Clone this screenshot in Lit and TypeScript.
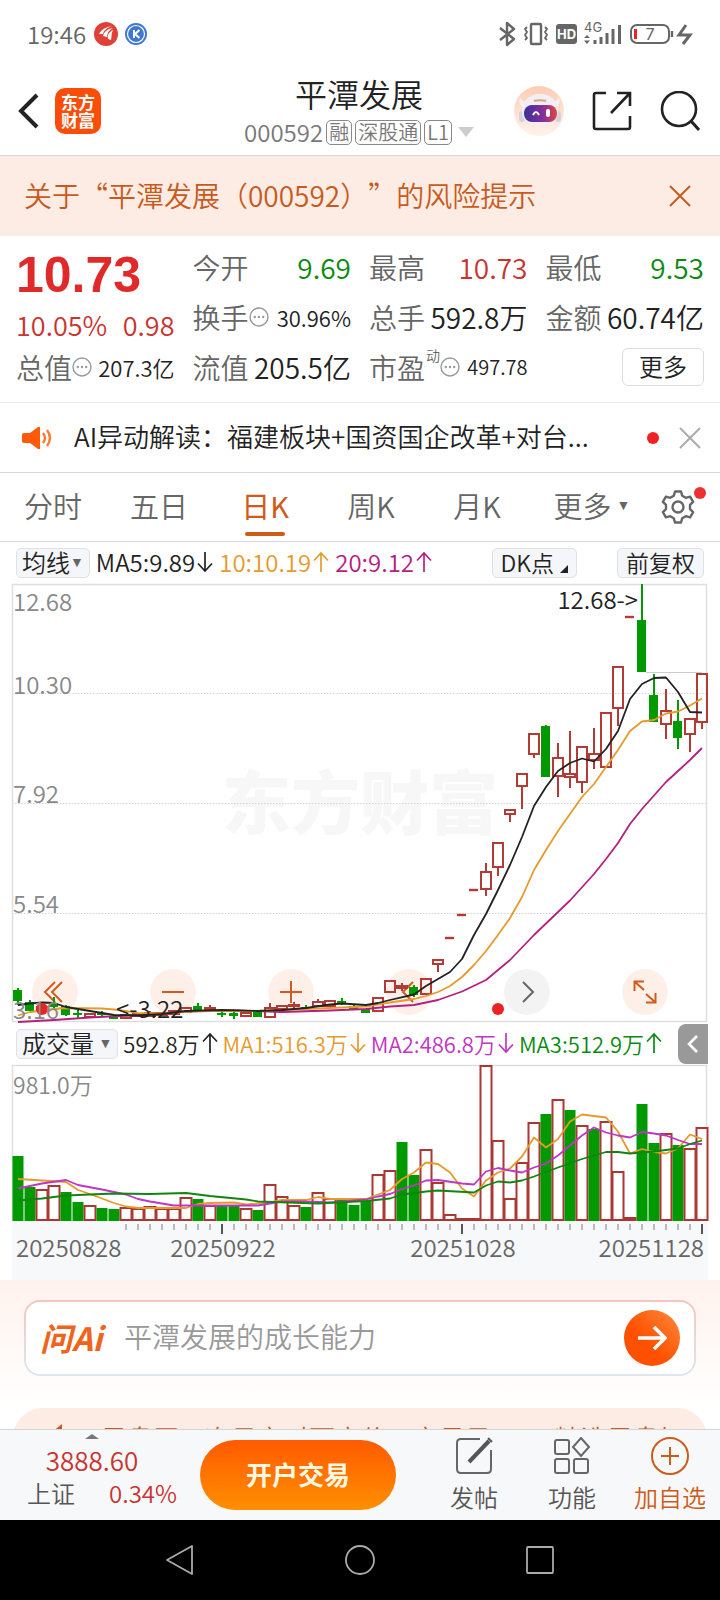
import { LitElement, html, svg, css } from "lit";
import { customElement, state } from "lit/decorators.js";
import { classMap } from "lit/directives/class-map.js";

type Candle = [up: 0 | 1, top: number, bottom: number, high?: number, low?: number];
type Point = [index: number, y: number];

const STEP = 12;
const cx = (i: number) => 6 + i * STEP;

// Body top/bottom and wick high/low, in chart units measured from the top edge.
const CANDLES: Candle[] = [
  [0, 406, 417, 404, 421], [0, 418, 427, 416, 427], [1, 423, 427, 421, 429], [0, 419, 423, 413, 424],
  [0, 422, 431, 421, 432], [0, 429, 431, 426, 434], [1, 430, 433], [0, 429, 431, 427, 432],
  [0, 432, 435], [1, 431, 434], [1, 430, 432], [1, 429, 432, 427, 432],
  [1, 429, 431], [1, 427, 430], [1, 424, 428], [0, 422, 426, 419, 426],
  [1, 424, 426, 421, 427], [0, 429, 431, 427, 433], [0, 429, 432, 428, 435], [1, 429, 432],
  [0, 428, 433], [1, 424, 433, 419, 433], [1, 422, 425], [1, 421, 422, 418, 425],
  [0, 423, 425, 421, 426], [1, 418, 422, 415, 422], [1, 417, 422], [0, 417, 420, 414, 421],
  [0, 422, 425, 421, 426], [0, 425, 429], [1, 414, 427], [1, 397, 408],
  [1, 402, 404, 399, 407], [0, 403, 411, 401, 413], [1, 395, 410], [1, 376, 380, 375, 388],
  [1, 354, 354], [1, 331, 331], [1, 306, 306], [1, 288, 305, 279, 312],
  [1, 259, 283, 258, 292], [1, 226, 230, 225, 238], [1, 190, 202, 189, 225], [1, 150, 170, 149, 174],
  [0, 142, 193, 141, 193], [1, 174, 192, 159, 213], [1, 190, 193, 147, 204], [1, 163, 198, 162, 209],
  [1, 170, 176, 144, 185], [1, 129, 183], [1, 83, 124, 82, 142], [1, 33, 33],
  [0, 36, 88, 0, 88], [0, 111, 138, 90, 138], [1, 127, 140, 105, 155], [0, 137, 154, 116, 165],
  [1, 135, 150, 134, 168], [1, 90, 138, 89, 145],
];

const VOLUMES = [
  65, 34, 31, 35, 29, 19, 15, 13, 12, 13, 12, 14, 12, 12, 23, 22, 15, 15, 15, 12, 11, 36, 24, 15, 14, 28, 22, 23, 16,
  20, 46, 50, 79, 46, 71, 38, 6, 2, 2, 155, 80, 22, 58, 98, 107, 121, 111, 95, 92, 99, 49, 3, 117, 78, 87, 76, 72, 93,
];
// Days whose volume bar takes the colour opposite to that of the candle.
const FLIPPED = new Set([3, 32, 46, 48]);

const MA5: Point[] = [
  [0, 421], [1, 419.5], [2, 418.5], [3, 419], [4, 423], [5, 425], [6, 427], [7, 429], [8, 431], [10, 431.5], [12, 430],
  [14, 427], [17, 426], [20, 427], [22, 426], [24, 424], [26, 420.5], [27, 419.5], [29, 421], [30, 419], [31, 416],
  [33, 410.5], [34, 402], [36, 388], [37, 375], [38, 351], [39, 330], [40, 306], [41, 281], [42, 253], [43, 222],
  [44, 203], [45, 187], [46, 179], [47, 174.5], [48, 177.5], [49, 165], [50, 147], [51, 115], [52, 100], [53, 94],
  [54, 93.5], [55, 108], [56, 128], [57, 128.5],
];
const MA10: Point[] = [
  [0, 431.5], [1, 428], [2, 426.5], [3, 425], [4, 424], [7, 424.5], [8, 425.5], [9, 427], [10, 429], [12, 429.5],
  [15, 427], [20, 427], [24, 425], [29, 422.5], [31, 418.5], [33, 415], [34, 412], [35, 408], [36, 402], [37, 393],
  [38, 381], [39, 367], [40, 351], [41, 334], [42, 313], [43, 286], [44, 266], [45, 247], [46, 230], [47, 213],
  [48, 200], [49, 183], [50, 166], [51, 147], [52, 137.5], [53, 136], [54, 129.5], [55, 127.5], [56, 121.5], [57, 114.5],
];
const MA20: Point[] = [
  [0, 438], [3, 436], [6, 433.5], [10, 431], [14, 427.5], [18, 426.5], [22, 428], [26, 426.5], [29, 425], [31, 422.5],
  [33, 421], [35, 416], [37, 407.5], [39, 396], [41, 376], [43, 351], [45, 328], [46, 316.5], [48, 290], [49, 275],
  [50, 259], [51, 240], [52, 225], [53, 211.5], [54, 198], [55, 187], [56, 176], [57, 164],
];

// Volume averages, as heights above the baseline.
const VMA1: Point[] = [
  [0, 42], [2, 40.5], [4, 39], [5, 31], [6, 27], [7, 22.5], [8, 18], [9, 14.5], [10, 13], [14, 13], [15, 17], [16, 18],
  [18, 18.5], [19, 16.5], [21, 18.5], [22, 21], [24, 21], [25, 24], [26, 22], [29, 22], [30, 26.5], [31, 31], [32, 42],
  [33, 48.5], [34, 58.5], [35, 57], [36, 48.5], [37, 32.5], [38, 24.5], [39, 40.5], [40, 48.5], [41, 52.5], [42, 64.5],
  [43, 83.5], [44, 73.5], [45, 82], [46, 99.5], [47, 106.5], [48, 105], [49, 103.5], [50, 89.5], [51, 67.5], [52, 72],
  [53, 69], [54, 67.5], [55, 72.5], [56, 86.5], [57, 82],
];
const VMA2: Point[] = [
  [0, 32.5], [2, 37.5], [4, 41], [5, 36], [7, 31.5], [9, 26.5], [10, 22], [11, 19.5], [13, 15.5], [16, 15.5], [20, 15.5],
  [22, 19.5], [24, 19.5], [26, 18.5], [29, 21.5], [30, 24.5], [31, 27], [32, 32], [33, 35.5], [34, 40.5], [35, 41],
  [37, 37.5], [38, 36.5], [39, 49.5], [40, 53], [41, 50.5], [42, 48.5], [43, 53.5], [44, 57.5], [45, 65.5], [46, 75.5],
  [47, 85.5], [48, 93.5], [49, 88.5], [50, 85.5], [51, 83.5], [52, 89], [53, 87.5], [54, 85.5], [55, 81], [56, 77], [57, 77],
];
const VMA3: Point[] = [
  [0, 20.5], [2, 22.5], [4, 25.5], [8, 27.5], [11, 27], [14, 28], [16, 25], [19, 21.5], [20, 19.5], [25, 17.5],
  [29, 20], [31, 22.5], [32, 26.5], [34, 29.5], [35, 30.5], [38, 28.5], [39, 35.5], [40, 39.5], [41, 38.5], [42, 40.5],
  [43, 44.5], [45, 53.5], [47, 62], [48, 65.5], [49, 69], [50, 69], [51, 67.5], [53, 69.5], [55, 72.5], [56, 77], [57, 80.5],
];

const line = (pts: Point[], map: (y: number) => number = (y) => y) =>
  pts.map(([i, y]) => `${cx(i)},${map(y)}`).join(" ");

const cross = html`<svg viewBox="0 0 22 22" width="22" height="22" aria-hidden="true">
  <path d="M1 1 21 21M21 1 1 21" fill="none" stroke="currentColor" stroke-width="2" /></svg>`;

const info = html`<svg class="info" viewBox="0 0 20 20" width="20" height="20" aria-hidden="true">
  <circle cx="10" cy="10" r="9" fill="none" stroke="#999" stroke-width="1.4" />
  <circle cx="5.8" cy="10" r="1.2" fill="#999" /><circle cx="10" cy="10" r="1.2" fill="#999" /><circle cx="14.2" cy="10" r="1.2" fill="#999" /></svg>`;

const arrow = (up: boolean) => html`<svg viewBox="0 0 16 22" width="16" height="22" aria-label=${up ? "升" : "降"}>
  <path d=${up ? "M8 21V2M1 9.5 8 2l7 7.5" : "M8 1v19M1 12.5 8 20l7-7.5"} fill="none" stroke="currentColor" stroke-width="1.7" /></svg>`;

@customElement("price-chart")
export class PriceChart extends LitElement {
  static styles = css`
    :host { display: block; position: relative; }
    .plot { display: block; position: relative; width: 100%; height: auto; overflow: visible; pointer-events: none; }
    text { font-family: "Noto Sans CJK SC", sans-serif; font-size: 24px; font-weight: 350; }
    .mark { font-size: 69px; font-weight: 900; fill: #f7f7f7; }
    .axis { fill: #888; }
    .note { fill: #222; }
    .tools { position: absolute; left: 20px; right: 40px; bottom: 7px; display: flex; justify-content: space-between; }
    .tool { width: 46px; height: 46px; padding: 0; border: 0; border-radius: 50%; background: #fef0e9; color: #d05c1e; }
    .tool.next { background: #f3f3f3; color: #666; }
    .tool svg { display: block; }
  `;

  private candle([up, top, bottom, high = top, low = bottom]: Candle, i: number) {
    const x = cx(i);
    const color = up ? "#b43a35" : "#009a00";
    if (top === bottom) return svg`<rect x=${x - 5} y=${top - 1.2} width="9" height="2.4" fill=${color} />`;
    return svg`
      <path d="M${x} ${high}V${top}M${x} ${bottom}V${low}" stroke=${color} stroke-width="2" />
      ${up
        ? svg`<rect x=${x - 5} y=${top} width="10" height=${bottom - top} fill="none" stroke=${color} stroke-width="2" />`
        : svg`<rect x=${x - 5} y=${top} width="9" height=${bottom - top} fill=${color} />`}`;
  }

  render() {
    const icons: [string, string][] = [
      ["快退", "M30 13 20 23l10 10M23 13 13 23l10 10"],
      ["缩小", "M12 23h22"],
      ["放大", "M12 23h22M23 12v22"],
      ["上一根", "M27 13 17 23l10 10"],
      ["下一根", "M19 13 29 23 19 33"],
      ["全屏", "M22 21 13 13M12.500 22v-9.500h9.500M24 25l9 8M33.500 24v9.500h-9.500"],
    ];
    return html`
      <div class="tools">
        ${icons.map(([label, d]) => html`<button class=${classMap({ tool: true, next: label === "下一根" })} aria-label=${label}>
          <svg viewBox="0 0 46 46" width="46" height="46" aria-hidden="true"><path d=${d} fill="none" stroke="currentColor" stroke-width="2" /></svg>
        </button>`)}
      </div>
      <svg class="plot" viewBox="0 0 696 438" role="img" aria-label="日K线图">
        <text class="mark" x="210" y="245">东方财富</text>
        <path d="M0 109.500H695M0 219.500H695M0 329.500H695" stroke="#d5d5d5" stroke-dasharray="1.500 1.500" />
        <rect x="0.500" y="0.500" width="694" height="437" fill="none" stroke="#dedede" stroke-width="1.500" />
        <path d="M634 88.500H690" stroke="#ccc" />
        ${CANDLES.map((c, i) => this.candle(c, i))}
        <g fill="none" stroke-width="1.800" stroke-linejoin="round">
          <polyline points=${line(MA20)} stroke="#b5207f" />
          <polyline points=${line(MA10)} stroke="#e69a2e" />
          <polyline points=${line(MA5)} stroke="#222" />
        </g>
        <circle cx="30" cy="425" r="6" fill="#ee2222" />
        <circle cx="486" cy="425" r="6" fill="#ee2222" />
        <text class="axis" x="1" y="27">12.68</text>
        <text class="axis" x="1" y="110">10.30</text>
        <text class="axis" x="1" y="219">7.92</text>
        <text class="axis" x="1" y="329">5.54</text>
        <text class="axis" x="1" y="435">3.16</text>
        <text class="note" x="626" y="25" text-anchor="end">12.68-&gt;</text>
        <text class="note" x="104" y="434">&lt;-3.22</text>
      </svg>`;
  }
}

@customElement("volume-chart")
export class VolumeChart extends LitElement {
  static styles = css`
    :host { display: block; }
    .plot { display: block; width: 100%; height: auto; overflow: visible; }
    text { font-family: "Noto Sans CJK SC", sans-serif; font-size: 24px; font-weight: 350; fill: #666; }
    .max { font-size: 23px; fill: #888; }
  `;

  render() {
    const base = 156;
    const up = (y: number) => base - y;
    const hollow = (i: number) => (CANDLES[i][0] === 1) !== FLIPPED.has(i);
    return html`<svg class="plot" viewBox="0 0 696 215" role="img" aria-label="成交量图">
      <rect x="0" y="156" width="696" height="59" fill="#f7f8fa" />
      <path d="M0.500 156V0.500H694.500V156" fill="none" stroke="#dedede" stroke-width="1.500" />
      ${VOLUMES.map((v, i) => hollow(i)
        ? svg`<rect x=${cx(i) - 5.5} y=${up(v)} width="11" height=${v - 1} fill="#fff" stroke="#ab3733" stroke-width="2" />`
        : svg`<rect x=${cx(i) - 5.5} y=${up(v)} width="11" height=${v} fill="#009a00" />`)}
      <g fill="none" stroke-width="1.800" stroke-linejoin="round">
        <polyline points=${line(VMA1, up)} stroke="#e69a2e" />
        <polyline points=${line(VMA2, up)} stroke="#bf35c4" />
        <polyline points=${line(VMA3, up)} stroke="#128412" />
      </g>
      ${VOLUMES.map((_, i) => i < 9 ? null : i % 20 === 17
        ? svg`<path d="M${cx(i)} 159V169" stroke="#555" stroke-width="2" />`
        : svg`<path d="M${cx(i)} 159V165" stroke="#bbb" stroke-width="2" />`)}
      <text class="max" x="1" y="29">981.0万</text>
      <text x="4" y="192">20250828</text>
      <text x="211" y="192" text-anchor="middle">20250922</text>
      <text x="451" y="192" text-anchor="middle">20251028</text>
      <text x="692" y="192" text-anchor="end">20251128</text>
    </svg>`;
  }
}

@customElement("app-root")
export class AppRoot extends LitElement {
  @state() private tab = "日K";

  static styles = css`
    :host { display: flex; flex-direction: column; height: 100vh; overflow: hidden; background: #fff; color: #222;
      font-family: "Noto Sans CJK SC", sans-serif; font-weight: 350; line-height: 1; }
    * { box-sizing: border-box; }
    button { font: inherit; color: inherit; border: 0; padding: 0; margin: 0; background: none; line-height: 1; cursor: pointer; }
    a { color: inherit; text-decoration: none; }
    svg { display: block; flex: none; }
    .status { display: flex; align-items: center; justify-content: space-between; height: 64px; padding: 3px 26px 0 27px; color: #666; flex: none; }
    .clock { display: flex; align-items: center; gap: 8px; font-size: 24px; }
    .head { display: grid; grid-template-columns: 1fr auto 1fr; align-items: center; height: 92px; padding: 0 20px 0 18px; border-bottom: 1px solid #d8d8d8; flex: none; }
    .left { display: flex; align-items: center; gap: 16px; padding-top: 2px; }
    .logo { display: grid; place-content: center; width: 46px; height: 46px; border-radius: 10px; background: #fa4d0a; color: #fff; font-size: 17px; line-height: 18px; font-weight: 700; }
    .title { display: flex; flex-direction: column; align-items: center; gap: 9px; }
    .name { margin: 0; font-size: 32px; line-height: 36px; font-weight: 350; }
    .code { display: flex; align-items: center; gap: 3px; font-size: 24px; color: #777; }
    .tag { display: block; height: 25px; padding: 0 2px; border: 1px solid #888; border-radius: 5px; font-size: 20px; line-height: 22px; }
    .down { width: 0; height: 0; margin-left: 3px; border: 8px solid transparent; border-top: 10px solid #ccc; border-bottom: 0; }
    .right { display: flex; align-items: center; justify-content: flex-end; gap: 28px; padding-top: 2px; }
    main { flex: 1; min-height: 0; overflow: hidden; }
    .notice { display: flex; align-items: center; justify-content: space-between; height: 80px; padding: 0 29px 0 24px; background: #fcece3; color: #c85a1e; font-size: 28px; text-spacing-trim: space-all; }
    .notice a { padding-bottom: 3px; }
    .quote { display: grid; grid-template-columns: repeat(4, 1fr); grid-auto-rows: 50px; column-gap: 18px; padding: 6px 16px 10px; border-bottom: 1px solid #e8e8e8; margin: 0; }
    .price { grid-row: span 2; color: #c8342f; font-size: 27px; }
    .last { height: 64px; font-family: "Liberation Sans", sans-serif; font-size: 50px; line-height: 66px; font-weight: 700; color: #e02a2a; }
    .change { display: flex; justify-content: space-between; height: 38px; line-height: 38px; }
    .cell { display: flex; align-items: center; justify-content: space-between; white-space: nowrap; font-size: 28px; }
    .label { display: flex; align-items: center; color: #666; }
    .sup { margin: 0 0 24px 1px; font-size: 14px; }
    .small { font-size: 22px; }
    .tiny { font-size: 20px; }
    .green { color: #0b8a12; }
    .red { color: #c8342f; }
    .more { width: 82px; height: 38px; margin-left: auto; padding-bottom: 2px; border: 1px solid #ddd; border-radius: 6px; font-size: 24px; }
    .brief { display: flex; align-items: center; height: 70px; padding: 0 19px 0 22px; border-bottom: 1px solid #d8d8d8; font-size: 26px; }
    .brief a { flex: 1; margin-left: 20px; padding-bottom: 3px; overflow: hidden; text-overflow: ellipsis; white-space: nowrap; line-height: 36px; }
    .dot { width: 12px; height: 12px; margin-right: 20px; border-radius: 50%; background: #ee2222; }
    .brief .close { color: #aaa; }
    .tabs { display: grid; grid-template-columns: repeat(6, 1fr) 84px; height: 69px; border-bottom: 1px solid #d8d8d8; font-size: 29px; color: #666; }
    .tab { display: flex; align-items: center; justify-content: center; gap: 5px; position: relative; padding-bottom: 4px; }
    .tab.on { color: #d05a18; font-weight: 400; }
    .tab.on::after { content: ""; position: absolute; left: calc(50% - 20px); bottom: 5px; width: 40px; height: 4px; border-radius: 2px; background: #d05a18; }
    .wide { padding-left: 18px; }
    .caret { font-size: 14px; font-family: "DejaVu Sans", sans-serif; color: #666; }
    .gear { padding-bottom: 0; }
    .badge { position: absolute; right: 14px; top: 14px; width: 12px; height: 12px; border-radius: 50%; background: #ee3030; }
    .bar { display: flex; align-items: center; gap: 6px; height: 42px; padding: 0 16px; white-space: nowrap; font-size: 24px; }
    .vol { position: relative; height: 43px; gap: 5px; font-size: 22px; }
    .chip { display: flex; align-items: center; height: 30px; padding: 0 5px 2px; border: 1px solid #dfe1e6; border-radius: 5px; background: #f5f6f9; font-size: 24px; }
    .chip.mid { font-size: 23px; padding: 0 8px 2px; }
    .ma { display: flex; align-items: center; gap: 2px; padding-bottom: 2px; }
    .push { margin-left: auto; margin-right: 34px; }
    .corner { align-self: flex-end; margin: 0 0 2px 6px; border: 4px solid #222; border-top-color: transparent; border-left-color: transparent; }
    .orange { color: #e69a2e; } .pink { color: #b5207f; } .violet { color: #bf35c4; }
    .drawer { display: grid; place-content: center; position: absolute; right: 12px; top: 2px; width: 30px; height: 40px; border-radius: 8px 0 0 8px; background: #999; color: #fff; }
    price-chart, volume-chart { margin: 0 12px; }
    .ask { padding: 20px 24px 32px; background: linear-gradient(#fff2ed, #fff); }
    .askbox { display: flex; align-items: center; height: 76px; padding: 0 14px; border: 2px solid transparent; border-radius: 16px;
      background: linear-gradient(#fff, #fff) padding-box, linear-gradient(#f3c6bd, #dfe6f2) border-box; }
    .askmark { width: 68px; margin-right: 16px; padding-bottom: 3px; font-size: 32px; font-weight: 700; font-style: italic; color: #f0631c; white-space: nowrap; }
    .ask input { flex: 1; min-width: 0; border: 0; padding: 0 0 4px; outline: 0; background: none; font: inherit; font-size: 28px; color: #222; }
    .ask input::placeholder { color: #999; opacity: 1; }
    .go { display: grid; place-content: center; width: 56px; height: 56px; border-radius: 50%; background: linear-gradient(45deg, #ff5000 40%, #ff8a3c); color: #fff; }
    .promo { display: flex; align-items: flex-start; gap: 28px; margin: 0 13px; padding: 14px 30px; border-radius: 34px; background: #fcece3; color: #c85a1e; font-size: 26px; line-height: 32px; white-space: nowrap; overflow: hidden; }
    .dock { display: flex; align-items: center; height: 91px; border-top: 1px solid #d2d4d8; background: #f7f8fa; color: #555; flex: none; font-size: 24px; }
    .index { display: grid; justify-items: center; gap: 8px; width: 184px; padding-bottom: 11px; }
    .upmark { width: 0; height: 0; border: 7px solid transparent; border-bottom: 5px solid #777; border-top: 0; }
    .points { font-size: 26px; color: #c8342f; }
    .pair { display: flex; gap: 34px; padding-left: 20px; }
    .open { flex: none; width: 196px; height: 70px; margin-left: 16px; padding-bottom: 3px; border-radius: 35px; background: linear-gradient(#ff5a00, #ff8f00); color: #fff8e0; font-size: 26px; font-weight: 700; }
    .acts { display: grid; grid-template-columns: repeat(3, 98px); justify-content: end; flex: 1; padding: 0 1px 4px 0; }
    .act { display: grid; justify-items: center; gap: 10px; }
    .act.hot { color: #d05a18; }
    .nav { display: flex; justify-content: center; gap: 148px; align-items: center; height: 80px; background: #000; flex: none; }
  `;

  private statusIcons() {
    return html`<svg viewBox="0 0 198 28" width="198" height="28" aria-label="蓝牙 振动 4G 电量7%">
      <g fill="none" stroke="#666" stroke-width="2.400" stroke-linejoin="round">
        <path d="M4 8 18 19 11 25V3l7 6L4 20" />
        <rect x="35" y="4" width="10" height="20" rx="1" />
        <path d="M31 7l-2 2 2 3-2 3 2 3-2 2M49 7l2 2-2 3 2 3-2 3 2 2" stroke-width="1.800" />
        <rect x="135" y="5" width="38" height="18" rx="6" stroke-width="2" />
        <path d="M176 11v6" />
      </g>
      <rect x="60" y="4" width="21" height="20" rx="3" fill="#666" />
      <text x="70.500" y="19" text-anchor="middle" font-size="13" font-weight="700" fill="#fff" font-family="Inter, sans-serif">HD</text>
      <text x="88" y="12" font-size="13" font-weight="400" fill="#666" font-family="Inter, sans-serif">4G</text>
      <path d="M91 15l3 3h-6zM91 24l3-3.500h-6z" fill="#666" />
      <path d="M99 20v4M105 17v7M111 13v11M117 9v15M123.500 5v19" stroke="#666" stroke-width="3" />
      <path d="M139.500 9v10" stroke="#e22" stroke-width="3" />
      <text x="154" y="20" text-anchor="middle" font-size="16" font-weight="400" fill="#666" font-family="Inter, sans-serif">7</text>
      <path d="M190 5l-7 10h11l-7 9" fill="none" stroke="#666" stroke-width="3" />
    </svg>`;
  }

  private cell(label: string, value: string, tone = "", extra: unknown = null) {
    return html`<div class="cell"><span class="label">${label}${extra}</span><span class=${tone}>${value}</span></div>`;
  }

  render() {
    const tabs = ["分时", "五日", "日K", "周K", "月K"];
    return html`
      <div class="status">
        <div class="clock"><span>19:46</span>
          <svg viewBox="0 0 54 24" width="54" height="24" aria-hidden="true">
            <circle cx="12" cy="12" r="12" fill="#df4038" />
            <path d="M5 12c3-5 7-7 13-8-5 2-8 4-9 8zM9 14c1-4 4-7 10-8-4 2-6 5-6 9zM14 17c-1-4 1-7 5-9-2 4-1 6-2 10z" fill="#fff" />
            <circle cx="42" cy="12" r="11" fill="#3f78cc" /><circle cx="42" cy="12" r="8.500" fill="none" stroke="#fff" stroke-width="1.200" />
            <path d="M40 8v8M45.500 8 41 12l4.500 4" fill="none" stroke="#fff" stroke-width="2" />
          </svg>
        </div>
        ${this.statusIcons()}
      </div>
      <header class="head">
        <div class="left">
          <button aria-label="返回"><svg viewBox="0 0 21 36" width="21" height="36"><path d="M19 2 3 18l16 16" fill="none" stroke="#222" stroke-width="4" /></svg></button>
          <a class="logo" href="#home">东方<br />财富</a>
        </div>
        <div class="title">
          <h1 class="name">平潭发展</h1>
          <div class="code"><span>000592</span><span class="tag">融</span><span class="tag">深股通</span><span class="tag">L1</span><span class="down"></span></div>
        </div>
        <div class="right">
          <button aria-label="智能助手"><svg viewBox="0 0 50 50" width="50" height="50">
            <defs>
              <linearGradient id="halo" x2="0" y2="1"><stop offset="0" stop-color="#fdcdb4" /><stop offset="1" stop-color="#fff3ec" /></linearGradient>
              <linearGradient id="visor"><stop offset="0" stop-color="#3a2f9a" /><stop offset=".6" stop-color="#8a2f9a" /><stop offset="1" stop-color="#e2483c" /></linearGradient>
            </defs>
            <circle cx="25" cy="25" r="25" fill="url(#halo)" />
            <path d="M9 22c-4-4-4-8-3-11 1 3 4 5 8 5zM42 22c4-4 4-8 3-11-1 3-4 5-8 5z" fill="#f4f1f5" />
            <rect x="5" y="25" width="6" height="11" rx="3" fill="#d5d2de" /><rect x="41" y="25" width="6" height="11" rx="3" fill="#d5d2de" />
            <path d="M26 8c12 0 18 8 18 17 0 11-7 14-18 14S8 36 8 25c0-9 6-17 18-17z" fill="#f1eff5" />
            <path d="M20 15q6-1.500 12 0" stroke="#d9a27c" stroke-width="2" fill="none" />
            <rect x="10" y="19" width="33" height="17" rx="8" fill="url(#visor)" />
            <path d="M19 29q3-6 6 0" fill="none" stroke="#fff" stroke-width="2" /><rect x="32" y="23" width="4" height="8" rx="2" fill="#fff" />
          </svg></button>
          <button aria-label="分享"><svg viewBox="0 0 40 40" width="40" height="40"><path d="M14 2H4Q2 2 2 4v32q0 2 2 2h32q2 0 2-2V25M25 2h13v13M38 2 19 22" fill="none" stroke="#222" stroke-width="2.600" /></svg></button>
          <button aria-label="搜索"><svg viewBox="0 0 40 40" width="40" height="40"><circle cx="19" cy="18" r="17" fill="none" stroke="#222" stroke-width="2.600" /><path d="M31 30l8 9" stroke="#222" stroke-width="3" /></svg></button>
        </div>
      </header>
      <main>
        <div class="notice"><a href="#risk">关于“平潭发展（000592）”的风险提示</a><button aria-label="关闭提示">${cross}</button></div>
        <section class="quote">
          <div class="price"><div class="last">10.73</div><div class="change"><span>10.05%</span><span>0.98</span></div></div>
          ${this.cell("今开", "9.69", "green")}
          ${this.cell("最高", "10.73", "red")}
          ${this.cell("最低", "9.53", "green")}
          ${this.cell("换手", "30.96%", "small", info)}
          ${this.cell("总手", "592.8万")}
          ${this.cell("金额", "60.74亿")}
          ${this.cell("总值", "207.3亿", "small", info)}
          ${this.cell("流值", "205.5亿")}
          ${this.cell("市盈", "497.78", "tiny", html`<span class="sup">动</span>${info}`)}
          <div class="cell"><button class="more">更多</button></div>
        </section>
        <div class="brief">
          <svg viewBox="0 0 32 24" width="32" height="24" aria-hidden="true">
            <path d="M2 7h6l8-6q2-1 2 1v20q0 2-2 1l-8-6H2q-2 0-2-2V9q0-2 2-2z" fill="#ff5a0a" />
            <path d="M21 7q4 5 0 10M25 4q6 8 0 16" fill="none" stroke="#ff7a30" stroke-width="2.400" />
          </svg>
          <a href="#brief">AI异动解读：福建板块+国资国企改革+对台...</a>
          <span class="dot"></span>
          <button class="close" aria-label="关闭解读">${cross}</button>
        </div>
        <nav class="tabs">
          ${tabs.map((t) => html`<button class=${classMap({ tab: true, on: t === this.tab })} @click=${() => (this.tab = t)}>${t}</button>`)}
          <button class="tab wide">更多<span class="caret">▼</span></button>
          <button class="tab gear" aria-label="设置">
            <svg viewBox="0 0 34 34" width="34" height="34"><path d="M14 1.500h6l1.200 4.200 3.600 2.100 4.300-1.100 3 5.200-3.100 3v4.200l3.100 3-3 5.200-4.300-1.100-3.600 2.100L20 32.500h-6l-1.200-4.200-3.600-2.100-4.300 1.100-3-5.200 3.100-3v-4.200l-3.100-3 3-5.200 4.300 1.100 3.600-2.100z" fill="none" stroke="#666" stroke-width="2.400" stroke-linejoin="round" /><circle cx="17" cy="17" r="5.500" fill="none" stroke="#666" stroke-width="2.400" /></svg>
            <span class="badge"></span>
          </button>
        </nav>
        <div class="bar">
          <button class="chip">均线<span class="caret">▼</span></button>
          <span class="ma">MA5:9.89${arrow(false)}</span><span class="ma orange">10:10.19${arrow(true)}</span><span class="ma pink">20:9.12${arrow(true)}</span>
          <button class="chip mid push">DK点<span class="corner"></span></button>
          <button class="chip mid">前复权</button>
        </div>
        <price-chart></price-chart>
        <div class="bar vol">
          <button class="chip">成交量<span class="caret">&nbsp;▼</span></button>
          <span class="ma">592.8万${arrow(true)}</span><span class="ma orange">MA1:516.3万${arrow(false)}</span><span class="ma violet">MA2:486.8万${arrow(false)}</span><span class="ma green">MA3:512.9万${arrow(true)}</span>
          <button class="drawer" aria-label="展开"><svg viewBox="0 0 12 18" width="12" height="18"><path d="M10 1 2 9l8 8" fill="none" stroke="#fff" stroke-width="2.600" /></svg></button>
        </div>
        <volume-chart></volume-chart>
        <section class="ask">
          <div class="askbox">
            <label class="askmark" for="ask">问Ai</label>
            <input id="ask" type="text" placeholder="平潭发展的成长能力" />
            <button class="go" aria-label="提问"><svg viewBox="0 0 30 26" width="30" height="26"><path d="M1 13h26M17 2l11 11-11 11" fill="none" stroke="#fff" stroke-width="3.600" /></svg></button>
          </div>
        </section>
        <a class="promo" href="#promo">
          <svg viewBox="0 0 30 28" width="30" height="28" aria-hidden="true"><path d="M2 10h7l10-8v24L9 18H2z" fill="#c85a1e" /></svg>
          <span>早盘买，次日交时可竞价，交易日14:50精选早盘好</span>
        </a>
      </main>
      <footer class="dock">
        <a class="index" href="#index"><span class="upmark"></span><span class="points">3888.60</span><span class="pair"><span>上证</span><span class="red">0.34%</span></span></a>
        <button class="open">开户交易</button>
        <div class="acts">
          <button class="act"><svg viewBox="0 0 38 38" width="38" height="38"><path d="M25 2H6Q2 2 2 6v26q0 4 4 4h26q4 0 4-4V13" fill="none" stroke="#666" stroke-width="2" /><path d="M14 25 34 4" stroke="#555" stroke-width="4" /><path d="M33 1l4 4" stroke="#555" stroke-width="2" /></svg>发帖</button>
          <button class="act"><svg viewBox="0 0 38 38" width="38" height="38"><g fill="none" stroke="#666" stroke-width="2"><rect x="2" y="3" width="14" height="14" rx="2" /><path d="M28 1l8 9-8 9-8-9z" /><rect x="2" y="22" width="14" height="14" rx="2" /><rect x="21" y="22" width="14" height="14" rx="2" /></g></svg>功能</button>
          <button class="act hot"><svg viewBox="0 0 38 38" width="38" height="38"><circle cx="19" cy="19" r="18" fill="none" stroke="#d05a18" stroke-width="2" /><path d="M10 19h18M19 10v18" stroke="#d05a18" stroke-width="2" /></svg>加自选</button>
        </div>
      </footer>
      <nav class="nav">
        <button aria-label="后退"><svg viewBox="0 0 32 32" width="32" height="32"><path d="M28 2v28L3 16z" fill="none" stroke="#aaa" stroke-width="1.800" stroke-linejoin="round" /></svg></button>
        <button aria-label="主屏幕"><svg viewBox="0 0 32 32" width="32" height="32"><circle cx="16" cy="16" r="14" fill="none" stroke="#aaa" stroke-width="1.800" /></svg></button>
        <button aria-label="最近任务"><svg viewBox="0 0 32 32" width="32" height="32"><rect x="3" y="3" width="26" height="26" rx="1" fill="none" stroke="#aaa" stroke-width="1.800" /></svg></button>
      </nav>`;
  }
}
